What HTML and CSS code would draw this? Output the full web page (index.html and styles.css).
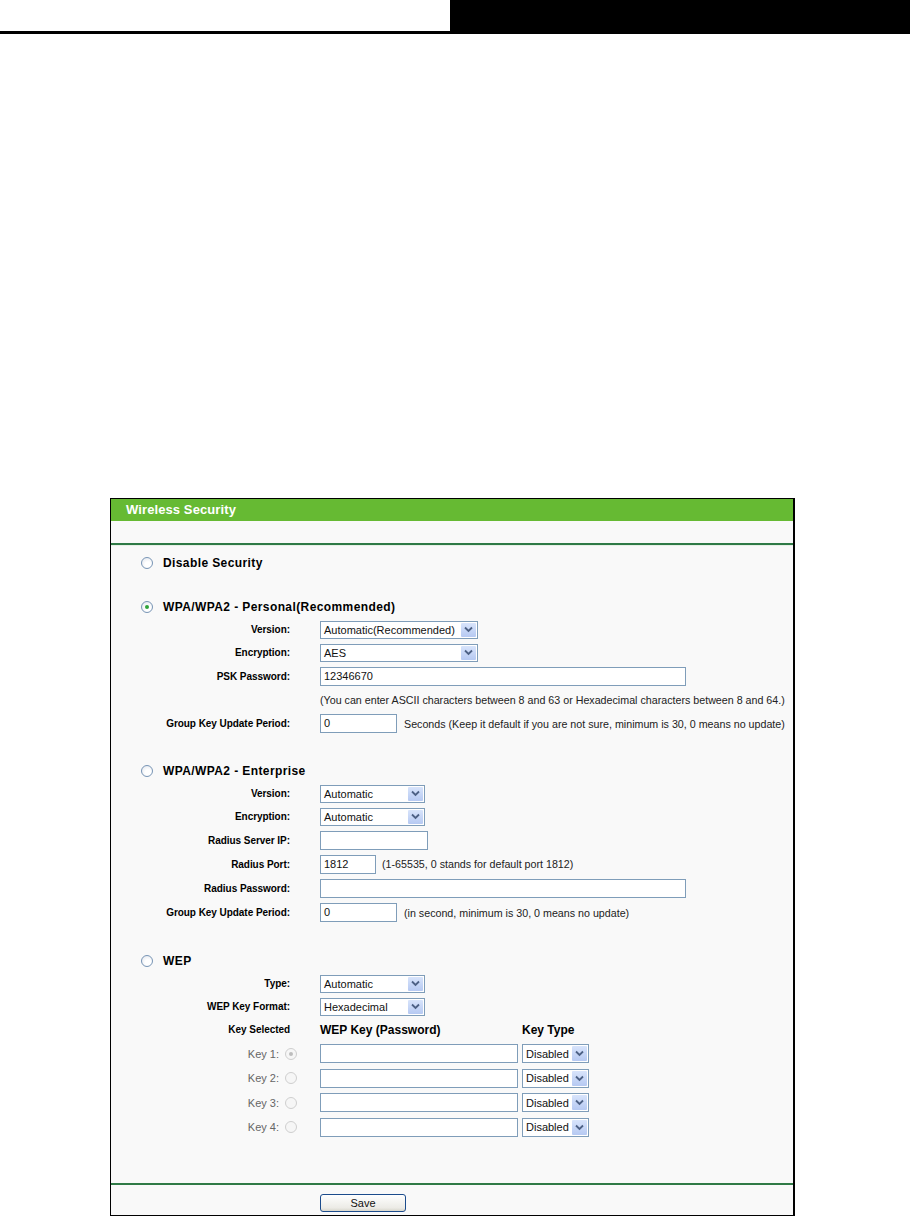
FILE: index.html
```html
<!DOCTYPE html>
<html>
<head>
<meta charset="utf-8">
<link rel="stylesheet" href="styles.css">
</head>
<body>
<div class="topbar"><div class="top-left"></div><div class="top-right"></div></div>
<div class="panel">
  <div class="ptitle">Wireless Security</div>
  <div class="psub"></div>
  <div class="pbody">
    <div class="head h22 first"><span class="radio"></span><span>Disable Security</span></div>
    <div class="spacer s22"></div>

    <div class="head h22"><span class="radio checked"></span><span>WPA/WPA2 - Personal(Recommended)</span></div>
    <div class="row h23"><div class="label">Version:</div><div class="ctrl"><div class="select w158"><span>Automatic(Recommended)</span><span class="arrow"><svg width="9" height="7" viewBox="0 0 9 7"><path d="M1 1.5 L4.5 5 L8 1.5" fill="none" stroke="#4d6185" stroke-width="1.8"/></svg></span></div></div></div>
    <div class="row h23"><div class="label">Encryption:</div><div class="ctrl"><div class="select w158"><span>AES</span><span class="arrow"><svg width="9" height="7" viewBox="0 0 9 7"><path d="M1 1.5 L4.5 5 L8 1.5" fill="none" stroke="#4d6185" stroke-width="1.8"/></svg></span></div></div></div>
    <div class="row h24"><div class="label">PSK Password:</div><div class="ctrl"><div class="input w366">12346670</div></div></div>
    <div class="row h23"><div class="label"></div><div class="ctrl note">(You can enter ASCII characters between 8 and 63 or Hexadecimal characters between 8 and 64.)</div></div>
    <div class="row h25"><div class="label">Group Key Update Period:</div><div class="ctrl"><div class="input w77">0</div><span class="after">Seconds (Keep it default if you are not sure, minimum is 30, 0 means no update)</span></div></div>
    <div class="spacer s24"></div>

    <div class="head h22"><span class="radio"></span><span>WPA/WPA2 - Enterprise</span></div>
    <div class="row h23"><div class="label">Version:</div><div class="ctrl"><div class="select w105"><span>Automatic</span><span class="arrow"><svg width="9" height="7" viewBox="0 0 9 7"><path d="M1 1.5 L4.5 5 L8 1.5" fill="none" stroke="#4d6185" stroke-width="1.8"/></svg></span></div></div></div>
    <div class="row h23"><div class="label">Encryption:</div><div class="ctrl"><div class="select w105"><span>Automatic</span><span class="arrow"><svg width="9" height="7" viewBox="0 0 9 7"><path d="M1 1.5 L4.5 5 L8 1.5" fill="none" stroke="#4d6185" stroke-width="1.8"/></svg></span></div></div></div>
    <div class="row h24"><div class="label">Radius Server IP:</div><div class="ctrl"><div class="input w108"></div></div></div>
    <div class="row h24"><div class="label">Radius Port:</div><div class="ctrl"><div class="input w56">1812</div><span class="after a6">(1-65535, 0 stands for default port 1812)</span></div></div>
    <div class="row h24"><div class="label">Radius Password:</div><div class="ctrl"><div class="input w366"></div></div></div>
    <div class="row h25"><div class="label">Group Key Update Period:</div><div class="ctrl"><div class="input w77">0</div><span class="after">(in second, minimum is 30, 0 means no update)</span></div></div>
    <div class="spacer s24"></div>

    <div class="head h23"><span class="radio"></span><span>WEP</span></div>
    <div class="row h23"><div class="label">Type:</div><div class="ctrl"><div class="select w105"><span>Automatic</span><span class="arrow"><svg width="9" height="7" viewBox="0 0 9 7"><path d="M1 1.5 L4.5 5 L8 1.5" fill="none" stroke="#4d6185" stroke-width="1.8"/></svg></span></div></div></div>
    <div class="row h23"><div class="label">WEP Key Format:</div><div class="ctrl"><div class="select w105"><span>Hexadecimal</span><span class="arrow"><svg width="9" height="7" viewBox="0 0 9 7"><path d="M1 1.5 L4.5 5 L8 1.5" fill="none" stroke="#4d6185" stroke-width="1.8"/></svg></span></div></div></div>
    <div class="row h23"><div class="label">Key Selected</div><div class="ctrl"><span class="colhead keycol">WEP Key (Password)</span><span class="colhead">Key Type</span></div></div>
    <div class="row h25"><div class="label keylabel"><span>Key 1:</span><span class="radio small dis checked-dis"></span></div><div class="ctrl kctrl"><div class="input w198"></div><div class="select w67"><span>Disabled</span><span class="arrow"><svg width="9" height="7" viewBox="0 0 9 7"><path d="M1 1.5 L4.5 5 L8 1.5" fill="none" stroke="#4d6185" stroke-width="1.8"/></svg></span></div></div></div>
    <div class="row h24"><div class="label keylabel"><span>Key 2:</span><span class="radio small dis"></span></div><div class="ctrl kctrl"><div class="input w198"></div><div class="select w67"><span>Disabled</span><span class="arrow"><svg width="9" height="7" viewBox="0 0 9 7"><path d="M1 1.5 L4.5 5 L8 1.5" fill="none" stroke="#4d6185" stroke-width="1.8"/></svg></span></div></div></div>
    <div class="row h25"><div class="label keylabel"><span>Key 3:</span><span class="radio small dis"></span></div><div class="ctrl kctrl"><div class="input w198"></div><div class="select w67"><span>Disabled</span><span class="arrow"><svg width="9" height="7" viewBox="0 0 9 7"><path d="M1 1.5 L4.5 5 L8 1.5" fill="none" stroke="#4d6185" stroke-width="1.8"/></svg></span></div></div></div>
    <div class="row h24"><div class="label keylabel"><span>Key 4:</span><span class="radio small dis"></span></div><div class="ctrl kctrl"><div class="input w198"></div><div class="select w67"><span>Disabled</span><span class="arrow"><svg width="9" height="7" viewBox="0 0 9 7"><path d="M1 1.5 L4.5 5 L8 1.5" fill="none" stroke="#4d6185" stroke-width="1.8"/></svg></span></div></div></div>
    <div class="spacer s44"></div>
  </div>
  <div class="pfoot"><div class="btn">Save</div></div>
</div>
</body>
</html>
```
FILE: styles.css
```css
html, body {
  margin: 0;
  padding: 0;
  background: #ffffff;
}
body {
  font-family: "Liberation Sans", Arial, sans-serif;
  color: #000;
  width: 910px;
  height: 1218px;
  overflow: hidden;
}
.topbar {
  display: flex;
  height: 34px;
}
.top-left {
  width: 450px;
  height: 31px;
  border-bottom: 3px solid #000;
}
.top-right {
  flex: 1;
  background: #000;
}
.panel {
  margin-top: 464px;
  margin-left: 110px;
  width: 682px;
  border: 1px solid #000;
  border-right-width: 2px;
  background: #f9f9f9;
}
.ptitle {
  height: 22px;
  line-height: 21px;
  background: #66ba33;
  color: #fff;
  font-weight: bold;
  font-size: 13px;
  padding-left: 15px;
  letter-spacing: 0.1px;
}
.psub {
  height: 22px;
  background: #f9f9f9;
  border-bottom: 2px solid #2f7a46;
}
.pbody {
  border-top: 1px solid #e6f0e6;
  padding-top: 6px;
}
.head {
  display: flex;
  align-items: center;
  padding-left: 30px;
  font-weight: bold;
  font-size: 12px;
  letter-spacing: 0.4px;
}
.head .radio {
  margin-right: 10px;
}
.h22 { height: 22px; }
.h23 { height: 23px; }
.h24 { height: 24px; }
.h25 { height: 25px; }
.s22 { height: 22px; }
.s24 { height: 24px; }
.s44 { height: 44px; }
.radio {
  display: inline-block;
  box-sizing: border-box;
  width: 12px;
  height: 12px;
  border-radius: 50%;
  border: 1px solid #7895b5;
  background: radial-gradient(circle at 60% 65%, #ffffff 30%, #dfe4ec 100%);
  position: relative;
  flex: none;
}
.radio.checked::after {
  content: "";
  position: absolute;
  left: 3px;
  top: 3px;
  width: 4px;
  height: 4px;
  border-radius: 50%;
  background: #2fa33a;
}
.radio.dis {
  border-color: #cfcfcf;
  background: #f6f6f6;
}
.radio.checked-dis::after {
  content: "";
  position: absolute;
  left: 3px;
  top: 3px;
  width: 4px;
  height: 4px;
  border-radius: 50%;
  background: #bdbdbd;
}
.row {
  display: flex;
  align-items: center;
}
.label {
  width: 179px;
  text-align: right;
  font-weight: bold;
  font-size: 10px;
  letter-spacing: -0.05px;
  flex: none;
  white-space: nowrap;
}
.ctrl {
  margin-left: 30px;
  display: flex;
  align-items: center;
  font-size: 11px;
  white-space: nowrap;
}
.keylabel {
  width: 186px;
  display: flex;
  justify-content: flex-end;
  align-items: center;
  font-weight: normal;
  font-size: 11px;
  color: #666;
  letter-spacing: 0;
}
.keylabel .radio {
  margin-left: 6px;
}
.kctrl {
  margin-left: 23px;
}
.note {
  font-size: 10.7px;
  color: #222;
}
.after {
  margin-left: 7px;
  font-size: 10.7px;
  color: #222;
  white-space: nowrap;
}
.after.a6 { margin-left: 6px; }
.input {
  box-sizing: border-box;
  height: 19px;
  border: 1px solid #7f9db9;
  background: #fff;
  font-size: 11px;
  line-height: 17px;
  padding-left: 3px;
  color: #111;
}
.select {
  box-sizing: border-box;
  height: 18px;
  border: 1px solid #7f9db9;
  background: #fff;
  display: flex;
  align-items: center;
  justify-content: space-between;
  font-size: 11px;
  padding-left: 3px;
  color: #111;
}
.arrow {
  width: 15px;
  height: 14px;
  margin-right: 1px;
  background: linear-gradient(#d8e4fb, #b6c9f2);
  border-radius: 1px;
  display: flex;
  align-items: center;
  justify-content: center;
}
.kctrl .select { margin-left: 4px; height: 19px; }
.kctrl .select .arrow { height: 15px; }
.w56 { width: 56px; }
.w67 { width: 67px; }
.w77 { width: 77px; }
.w105 { width: 105px; }
.w108 { width: 108px; }
.w158 { width: 158px; }
.w198 { width: 198px; }
.w366 { width: 366px; }
.colhead {
  font-weight: bold;
  font-size: 12px;
}
.keycol {
  width: 202px;
}
.pfoot {
  border-top: 2px solid #2f7a46;
  height: 32px;
  padding-top: 9px;
  box-sizing: border-box;
  padding-left: 209px;
  background: #f9f9f9;
}
.btn {
  box-sizing: border-box;
  width: 86px;
  height: 18px;
  border: 1px solid #1c4c8c;
  border-radius: 3px;
  background: linear-gradient(#ffffff, #ecebe6 80%, #d8d6cc);
  font-size: 11px;
  line-height: 16px;
  text-align: center;
  color: #111;
}
```
